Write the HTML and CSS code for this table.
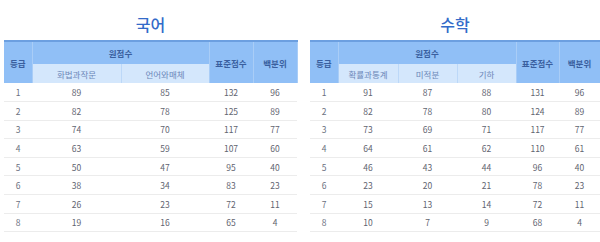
FILE: index.html
```html
<!DOCTYPE html>
<html lang="ko">
<head>
<meta charset="utf-8">
<link rel="stylesheet" href="styles.css">
</head>
<body>
<div class="page">
  <section class="panel panel-left">
    <h2 class="title">국어</h2>
    <table class="score">
      <colgroup><col class="c-grade"><col class="c-k1"><col class="c-k2"><col class="c-std"><col class="c-pct"></colgroup>
      <thead>
        <tr class="h1">
          <th rowspan="2">등급</th>
          <th colspan="2">원점수</th>
          <th rowspan="2">표준점수</th>
          <th rowspan="2">백분위</th>
        </tr>
        <tr class="h2">
          <th class="sub">화법과작문</th>
          <th class="sub">언어와매체</th>
        </tr>
      </thead>
      <tbody>
        <tr><td class="g">1</td><td>89</td><td>85</td><td>132</td><td>96</td></tr>
        <tr><td class="g">2</td><td>82</td><td>78</td><td>125</td><td>89</td></tr>
        <tr><td class="g">3</td><td>74</td><td>70</td><td>117</td><td>77</td></tr>
        <tr><td class="g">4</td><td>63</td><td>59</td><td>107</td><td>60</td></tr>
        <tr><td class="g">5</td><td>50</td><td>47</td><td>95</td><td>40</td></tr>
        <tr><td class="g">6</td><td>38</td><td>34</td><td>83</td><td>23</td></tr>
        <tr><td class="g">7</td><td>26</td><td>23</td><td>72</td><td>11</td></tr>
        <tr><td class="g">8</td><td>19</td><td>16</td><td>65</td><td>4</td></tr>
      </tbody>
    </table>
  </section>
  <section class="panel panel-right">
    <h2 class="title">수학</h2>
    <table class="score">
      <colgroup><col class="c-grade"><col class="c-m1"><col class="c-m2"><col class="c-m3"><col class="c-mstd"><col class="c-mpct"></colgroup>
      <thead>
        <tr class="h1">
          <th rowspan="2">등급</th>
          <th colspan="3">원점수</th>
          <th rowspan="2">표준점수</th>
          <th rowspan="2">백분위</th>
        </tr>
        <tr class="h2">
          <th class="sub">확률과통계</th>
          <th class="sub">미적분</th>
          <th class="sub">기하</th>
        </tr>
      </thead>
      <tbody>
        <tr><td class="g">1</td><td>91</td><td>87</td><td>88</td><td>131</td><td>96</td></tr>
        <tr><td class="g">2</td><td>82</td><td>78</td><td>80</td><td>124</td><td>89</td></tr>
        <tr><td class="g">3</td><td>73</td><td>69</td><td>71</td><td>117</td><td>77</td></tr>
        <tr><td class="g">4</td><td>64</td><td>61</td><td>62</td><td>110</td><td>61</td></tr>
        <tr><td class="g">5</td><td>46</td><td>43</td><td>44</td><td>96</td><td>40</td></tr>
        <tr><td class="g">6</td><td>23</td><td>20</td><td>21</td><td>78</td><td>23</td></tr>
        <tr><td class="g">7</td><td>15</td><td>13</td><td>14</td><td>72</td><td>11</td></tr>
        <tr><td class="g">8</td><td>10</td><td>7</td><td>9</td><td>68</td><td>4</td></tr>
      </tbody>
    </table>
  </section>
</div>
</body>
</html>
```

FILE: styles.css
```css
html, body {
  margin: 0;
  padding: 0;
  background: #ffffff;
}
body {
  font-family: "Noto Sans CJK KR", "Noto Sans", sans-serif;
  width: 600px;
  height: 242px;
  overflow: hidden;
}
.page {
  display: flex;
  gap: 13px;
  padding-left: 4px;
}
.panel-left { width: 293px; }
.panel-right { width: 290px; }
.title {
  margin: 0;
  height: 40px;
  padding-top: 14px;
  box-sizing: border-box;
  text-align: center;
  font-size: 16px;
  line-height: 20px;
  font-weight: 500;
  color: #336bc9;
}
.score {
  width: 100%;
  table-layout: fixed;
  border-collapse: collapse;
  font-size: 8.5px;
}
.c-grade { width: 28px; }
.c-k1 { width: 89px; }
.c-k2 { width: 88px; }
.c-std { width: 44px; }
.c-pct { width: 44px; }
.c-m1 { width: 60px; }
.c-m2 { width: 59px; }
.c-m3 { width: 59px; }
.c-mstd { width: 43px; }
.c-mpct { width: 41px; }
.score th {
  background: #90bff6;
  color: #3a5f9f;
  font-weight: 700;
  padding: 0;
  border-left: 1px solid #a9cdf7;
  border-right: 1px solid #a9cdf7;
}
.score th:first-child { border-left: none; }
.score thead tr.h1 th {
  border-top: 2px solid #6c9fe0;
}
.score tr.h1 { height: 23px; }
.score tr.h2 { height: 19px; }
.score th.sub {
  background: #d4e7fc;
  color: #6a86b8;
  font-weight: 400;
  border-left: 1px solid #bcd8f8;
  border-right: 1px solid #bcd8f8;
}
.score tbody tr {
  height: 18.6px;
  border-bottom: 1px solid #ececec;
}
.score td {
  padding: 0;
  text-align: center;
  color: #5f6470;
}
.score td.g {
  color: #6b7080;
}
```
